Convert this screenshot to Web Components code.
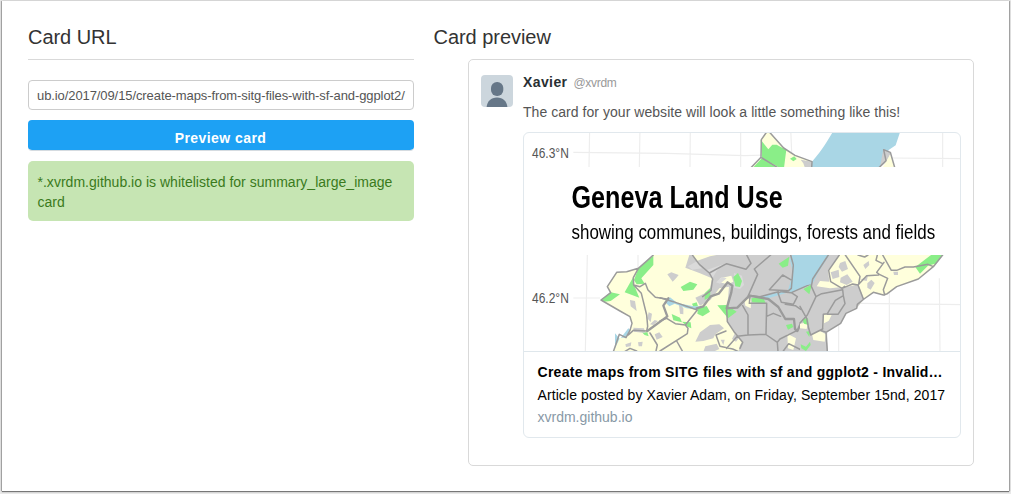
<!DOCTYPE html>
<html lang="en"><head><meta charset="utf-8"><title>Card validator</title>
<style>
html,body{margin:0;height:100%}
body{font-family:"Liberation Sans",Arial,sans-serif;color:#292f33;background:#fff}
</style></head><body>
<validator-page>
  <card-form slot="form" url="ub.io/2017/09/15/create-maps-from-sitg-files-with-sf-and-ggplot2/">*.xvrdm.github.io is whitelisted for summary_large_image card</card-form>
  <tweet-preview slot="preview" name="Xavier" handle="@xvrdm">
    <span slot="text">The card for your website will look a little something like this!</span>
    <summary-card>
      <land-map slot="image"></land-map>
      <span slot="title">Create maps from SITG files with sf and ggplot2 - Invalid…</span>
      <span slot="description">Article posted by Xavier Adam, on Friday, September 15nd, 2017</span>
      <span slot="domain">xvrdm.github.io</span>
    </summary-card>
  </tweet-preview>
</validator-page>
<script>
const define=(name,html,setup)=>customElements.define(name,class extends HTMLElement{
  constructor(){super();this.attachShadow({mode:'open'}).innerHTML=html;}
  connectedCallback(){if(setup)setup(this,this.shadowRoot);}
});

define('validator-page',`<style>
:host{display:block;box-sizing:border-box;height:494px;padding:1px 2px 3px;background:#e9e9e9}
main{box-sizing:border-box;height:490px;background:#fff;padding:24px 35px 0 26px;display:grid;grid-template-columns:386px 540px;gap:20px;box-shadow:0 1px 1px #777,-1px 0 1px #aaa,1px 0 1px #aaa}
h2{margin:0;font-size:20px;line-height:24px;font-weight:400;color:#333;letter-spacing:-.04px}
.l h2{padding-bottom:10px;border-bottom:1px solid #d9d9d9;margin-bottom:20px}
.r h2{margin-bottom:10px;margin-left:-.5px}
</style><main><section class="l"><h2>Card URL</h2><slot name="form"></slot></section><section class="r"><h2>Card preview</h2><slot name="preview"></slot></section></main>`);

define('card-form',`<style>
:host{display:grid;gap:10px}
.field{box-sizing:border-box;height:30px;border:1px solid #ccc;border-radius:4px;padding:0 8px;line-height:29px;font-size:13px;letter-spacing:-.09px;color:#555;white-space:nowrap;overflow:hidden}
.btn{font:bold 14px/36px "Liberation Sans",Arial,sans-serif;height:31px;box-sizing:border-box;border:0;border-bottom:1px solid #d5dbe0;border-radius:4px;background:#1da1f4 padding-box;color:#fff;padding:0 1px 0 0;letter-spacing:.44px;text-align:center}
.msg{box-sizing:border-box;height:60px;padding:11px 10px 0 9.500px;border-radius:5px;background:#c6e5b3;color:#3a7a1c;font-size:14px;line-height:20px;letter-spacing:.015px}
</style><div class="field"><span></span></div><div class="btn" role="button">Preview card</div><div class="msg"><slot></slot></div>`,
(h,r)=>{r.querySelector('span').textContent=h.getAttribute('url')});

define('tweet-preview',`<style>
:host{display:grid;box-sizing:border-box;margin-left:34px;width:506px;height:407px;border:1px solid #d9d9d9;border-radius:5px;padding:15px 12px;grid-template-columns:32px 438px;column-gap:10px;align-items:start}
svg{display:block;border-radius:4px}
.col{margin-top:-1px}
.who{font-size:14px;line-height:16px;display:flex;gap:6px}
b{color:#292f33;letter-spacing:.4px}
i{font-style:normal;font-size:12px;line-height:18px;color:#999;letter-spacing:-.3px}
.text{font-size:14px;line-height:18px;color:#555;margin:11px 0;letter-spacing:.045px;white-space:nowrap}
</style><svg width="32" height="32" viewBox="0 0 32 32"><defs><filter id="s"><feGaussianBlur stdDeviation=".35"/></filter></defs><rect width="32" height="32" fill="#ccd6dd"/><g fill="#667788" filter="url(#s)"><rect x="10" y="7" width="12.3" height="14" rx="6"/><path d="M5.5 33C6 26 10 22.5 16 22.500S26 26 26.500 33z"/></g></svg>
<div class="col"><div class="who"><b></b><i></i></div><div class="text"><slot name="text"></slot></div><slot></slot></div>`,
(h,r)=>{r.querySelector('b').textContent=h.getAttribute('name');r.querySelector('i').textContent=h.getAttribute('handle')});

define('summary-card',`<style>
:host{display:block;box-sizing:border-box;width:438px;height:306px;border:1px solid #e1e8ed;border-radius:6px;overflow:hidden}
.body{border-top:1px solid #dfe7ec;padding:9px 0 0 13.500px;color:#000;font-size:14px;white-space:nowrap}
.t{font-weight:bold;line-height:22px;letter-spacing:.27px}.d{line-height:24px;letter-spacing:.09px}.u{line-height:21px;color:#8899a6}
</style><slot name="image"></slot><div class="body"><div class="t"><slot name="title"></slot></div><div class="d"><slot name="description"></slot></div><div class="u"><slot name="domain"></slot></div></div>`);

define('land-map',`<style>
:host{display:block;height:218px}
svg{display:block}
text{font-family:"Liberation Sans Narrow","Liberation Sans",Arial,sans-serif}
.g{fill:#cdcdcd}.f{fill:#8aee88}.y{fill:#ffffdc}.w{fill:#a9d6e5}
.b{fill:none;stroke:#9b9b9b;stroke-width:4.500;stroke-linejoin:round;stroke-linecap:round}
.q{fill:none;stroke:#ededed;stroke-width:3.500}
</style><svg width="436" height="218" viewBox="524 133 436 218">
<defs><clipPath id="top"><rect x="0" y="0" width="1400" height="117"/></clipPath><clipPath id="bot"><rect x="0" y="30" width="1400" height="300"/></clipPath>
<filter id="soft" x="0" y="0" width="1" height="1"><feGaussianBlur stdDeviation=".35"/></filter></defs>
<g filter="url(#soft)">
<g transform="translate(520 128) scale(.33333)"><g clip-path="url(#top)">
<path class="q" d="M209 0L207 117M360 0L358 117M511 0L510 117M662 0V117M1268 0V117M160 73L440 76L675 83L740 81M1110 90L1330 92M812 0L815 75"/>
<g transform="translate(660 0)">
<path class="w" d="M286 0C260 40 252 60 216 101L214 120H420L436 92L446 66L467 52L481 10V0z"/>
<path class="y" d="M80 12H90L132 60L165 82L216 101V120H34L66 90L62 35z"/>
<path class="f" d="M62 35L85 64L97 50H110L139 66L137 80L132 120H112L66 90L38 120H120L66 90z"/><path class="f" d="M150 92L163 85L170 93L160 100z"/>
<path class="g" d="M182 95L216 101V120H195L190 106z"/><path class="g" d="M430 64L452 74L442 100L420 117z"/><path class="y" d="M450 80L464 118H428z"/>
<path class="b" d="M80 12L64 35L63 88L34 118M66 90L112 118M88 12L131 60L165 82L216 101L215 120M418 118L438 98L431 65L451 73L464 118"/>
</g></g></g>
<g transform="translate(520 245) scale(.33333)"><g clip-path="url(#bot)">
<path class="q" d="M202 30L196 320M354 30V80M160 159H240M956 230V320M1108 120V320M1258 100L1260 320M1020 175L1330 179"/>
<path class="w" d="M285 265L300 282L325 250L340 263L300 320H285z"/>
<path class="y" d="M400 30L378 50L355 70L320 80L290 82L262 125L272 143L243 165L300 198L330 215L336 235L330 256L316 278L300 278L280 320H922L918 262L962 235L978 205L1010 190L1032 162L1060 142L1090 150L1102 146L1130 125L1195 102L1240 65L1268 30z"/>
<path class="f" d="M400 32L378 50L355 70L342 105L350 118L374 116L364 100L400 60zM342 92L314 142L358 158L342 120zM272 142L300 148L272 168L252 170L243 165zM366 262L382 262L386 274L374 270z"/>
<path class="g" d="M330 165L345 168L350 198L332 184zM386 202L396 206L392 232L382 220zM404 268L418 262L428 276L410 284zM316 298L334 292L332 304L318 306zM354 292L368 290L366 304L356 304zM340 248L372 250L376 264L342 260zM404 225L414 228L400 240L390 238z"/>
<path class="b" d="M400 30L378 50L355 70L320 80L290 82L262 125L272 143L243 165L300 198L330 215L336 235L330 256L318 278L298 268L280 320M355 70L340 98L341 120L364 145L380 210L383 244L380 258L340 256L325 270M341 120L360 125L376 115L384 135L406 157L440 162M314 320L330 310L350 318M408 318L412 300L390 264"/>
<g transform="translate(420 0)">
<path class="g" d="M88 30H500L502 320H236L240 300L248 292L222 260L202 230L200 192L205 150L207 125L178 130L151 165L120 182L106 158L135 145L150 130L156 100L118 84L76 68z"/>
<path class="g" d="M120 262L150 240L178 238L192 250L166 268L160 280L130 288L106 290zM136 304L170 296L178 312L160 320H130z"/>
<path class="g" d="M22 88L34 82L56 90L48 100L38 110zM56 172L70 190V208L60 206zM182 284H194L190 300zM224 266L236 280L228 290L216 282z"/>
<path class="y" d="M94 30L110 48L150 34L170 30zM180 100L214 92L220 110L204 118L178 112zM253 165L274 160L272 190L256 182zM382 266L408 280L400 315L384 310zM420 220H445V270L424 245z"/>
<path fill="#dadada" d="M84 64L112 48L126 70L96 74zM140 75L190 58L170 78L158 98zM222 84L246 92L252 120L240 132L222 128zM200 100L180 116L168 112L185 96z"/>
<path class="f" d="M62 126L90 110L112 118L100 134L70 138zM220 96L234 84L246 108L240 126L226 124zM134 145L152 128L150 155L134 165zM35 207L60 218L66 232L40 226zM66 230L92 232L94 250L80 244zM114 190L140 183L150 200L128 214L112 206zM172 181L200 180L230 200L204 220zM274 160L308 155L318 176L276 172zM356 56L388 35L384 62L368 68zM96 176L110 172L114 184L100 185zM378 240L396 236L400 246L384 254z"/>
<path class="w" d="M395 30H530L490 100L442 120L394 143L384 136L399 85L390 45zM14 170L30 157L52 174L100 184L122 184L112 194L80 190L44 176L28 184zM300 156L380 136L385 142L325 160z"/>
<path class="b" style="stroke-width:7" d="M-38 258L22 214L10 182L25 160M110 190L130 184L152 154L176 146L203 112L217 122L214 142L200 190L232 188L268 152L325 162L355 186L376 222L402 222L405 252L412 258L430 220L444 228"/>
<path class="b" d="M97 30L118 58L148 84L158 102L153 136L128 155M148 84L200 56L258 73L273 55L260 30M332 30L283 72L293 88L265 152M392 30L400 60L394 130L386 137L328 134L368 90L392 104M450 118L394 143L364 140L354 144L364 172L400 178L412 155L394 143M270 155L268 175H320L318 268L265 270M248 182L264 210V270L232 274L200 310M355 140L300 155L265 151M320 175V214L340 205L362 214M320 270L352 292L354 320M352 292L360 282L412 256M376 178L406 182L446 210M370 318L386 296L430 318M0 228L20 220L46 236L76 240L112 195L40 170L0 158M76 240L84 250L82 266L0 318M50 288L68 320M200 190L202 230L222 260L248 292L240 310M198 258L168 270L180 304L218 312L236 320"/>
</g>
<g transform="translate(840 0)">
<path class="g" d="M88 30L50 90L34 125L0 200V320H84L78 262L122 235L138 205L170 190L192 162L174 118L126 130L90 118L86 78L118 30z"/>
<path class="w" d="M0 30H85L34 104V118L0 124z"/>
<path class="y" d="M118 32L136 30L180 112L128 126L90 130L50 124L60 108L88 110L84 75L120 44zM72 208H96L86 228L70 250zM36 268L60 258L78 268L74 290L40 285zM0 236L24 232L20 252L0 250z"/>
<path class="g" d="M120 54L136 48L144 72L126 80L116 66zM92 82L116 74L118 96L98 102zM122 98L142 88L158 110L140 120L120 112zM190 60L206 48L208 60L196 72zM202 115L214 104L224 114L212 134L202 128zM280 80H294V90H282zM182 104L204 92L200 108zM72 235L90 226L88 244L70 248z"/>
<path class="f" d="M346 66L388 34L396 28H430L410 55L384 62L360 86zM10 132L36 118L28 148zM6 222L24 220L26 240L12 236zM18 260L30 258L28 276zM2 298L18 305L30 290L32 300L18 318L4 310z"/>
<path class="b" d="M428 30L400 65L355 102L290 125L262 146L250 150L220 142L192 162L172 178L170 190L138 205L122 235L78 262M248 30L274 76L290 76L315 66L340 66L384 58L400 65M252 52L230 82L238 88L263 100L250 134L254 150M232 30L228 46L248 56M174 30L194 36L204 30M190 162L174 120L200 92L236 90M136 30L180 94L176 118M118 30L86 76L92 110L126 130L158 117L174 120M85 30L38 102L34 124L48 155L22 210L0 234M48 155L65 146L128 134L130 152L106 166L82 206L70 208L68 252L32 270L26 250L20 220L0 184M130 152L135 176L114 208H82M32 270L60 256L78 262L82 320M126 130L134 124"/>
</g></g></g></g>
<g fill="#555" font-size="15"><text transform="translate(532 157.500) scale(.8 1)" textLength="46" lengthAdjust="spacingAndGlyphs">46.3°N</text>
<text transform="translate(532 303) scale(.8 1)" textLength="46" lengthAdjust="spacingAndGlyphs">46.2°N</text></g>
<text transform="translate(571.500 208) scale(.85 1)" font-size="31" font-weight="bold" textLength="248.500" lengthAdjust="spacingAndGlyphs">Geneva Land Use</text>
<text transform="translate(571.500 239) scale(.87 1)" font-size="20.500" textLength="418" lengthAdjust="spacingAndGlyphs">showing communes, buildings, forests and fields</text>
</svg>`);
</script>
</body></html>
